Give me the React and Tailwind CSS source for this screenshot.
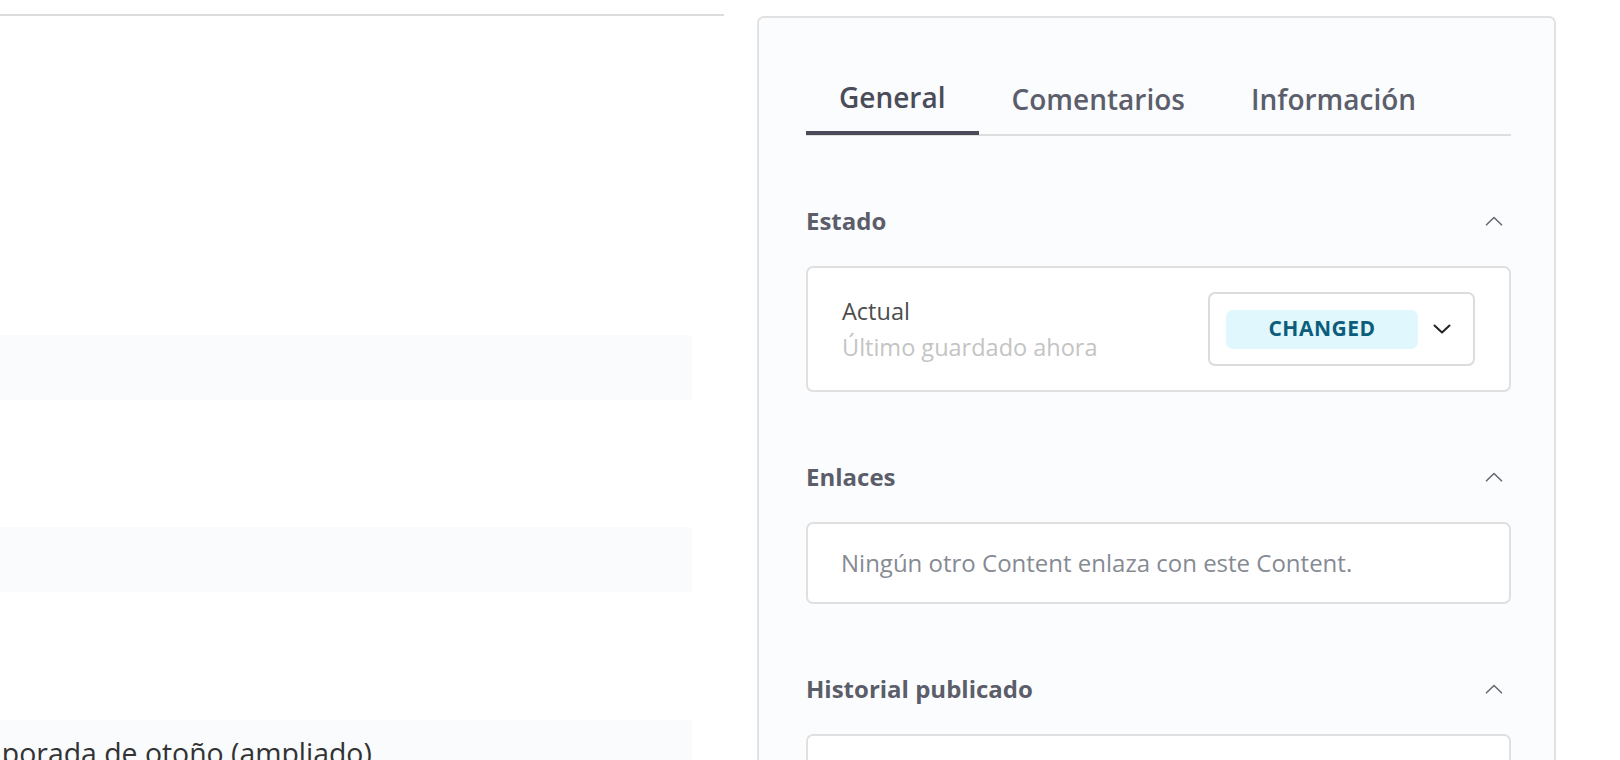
import React from 'react';

const ChevronUp = () => (
  <svg width="18" height="10" viewBox="0 0 18 10" fill="none" stroke="#666a73" strokeWidth="1.6" strokeLinecap="round" strokeLinejoin="round">
    <path d="M1.5 8.8 L9 1.5 L16.5 8.8" />
  </svg>
);

const ChevronDown = () => (
  <svg width="18" height="10" viewBox="0 0 18 10" fill="none" stroke="#222" strokeWidth="2" strokeLinecap="round" strokeLinejoin="round">
    <path d="M1.5 1.5 L9 8.5 L16.5 1.5" />
  </svg>
);

// Section header + bordered card
const Section = ({ title, children, className = '' }) => (
  <div className="mt-[69px]">
    <div className="h-[32px] flex items-center justify-between">
      <h3 className="text-[24px] font-bold text-[#5b5e6a] leading-[32px]">{title}</h3>
      <span className="mr-[8px] flex items-center"><ChevronUp /></span>
    </div>
    <div className={`mt-[29px] bg-white border-2 border-[#e0e0e0] rounded-[7px] ${className}`}>
      {children}
    </div>
  </div>
);

const Tab = ({ label, active }) => (
  <button
    className={`px-[33px] pb-[15px] text-[28px] leading-[38px] font-semibold ${
      active ? 'text-[#4a4c59] border-b-4 border-[#4b4c59] -mb-[1px]' : 'text-[#5c5f6b]'
    }`}
  >
    {label}
  </button>
);

const App = () => {
  return (
    <div className="w-[1620px] h-[760px] overflow-hidden bg-white flex font-['Open_Sans',sans-serif]">
      {/* Left column (scrolled, mostly empty) */}
      <div className="w-[724px] shrink-0 overflow-hidden">
        <div className="h-[16px] border-b-2 border-[#dcdcdc]" />
        <div className="h-[319px]" />
        <div className="w-[692px] h-[65px] bg-[#fafbfd]" />
        <div className="h-[127px]" />
        <div className="w-[692px] h-[65px] bg-[#fafbfd]" />
        <div className="h-[128px]" />
        <div className="w-[692px] h-[65px] bg-[#fafbfd] flex items-center">
          <span className="-ml-[56px] text-[28.4px] text-[#333] whitespace-nowrap leading-[38px]">
            Temporada de otoño (ampliado)
          </span>
        </div>
      </div>

      {/* Right side panel */}
      <div className="ml-[33px] mt-[16px] w-[799px] shrink-0 h-[800px] border-2 border-[#e2e2e2] rounded-[7px] bg-[#fbfcfd] pl-[47px] pr-[43px] pt-[60px]">
        <div className="flex border-b-2 border-[#dedede]">
          <Tab label="General" active />
          <Tab label="Comentarios" />
          <Tab label="Información" />
        </div>

        <Section title="Estado" className="px-[34px] py-[24px] flex items-center justify-between">
          <div className="text-[23.5px] leading-[36px]">
            <p className="text-[#4d4d4d]">Actual</p>
            <p className="text-[#c4c4c4]">Último guardado ahora</p>
          </div>
          <div className="w-[267px] h-[74px] border-2 border-[#dcdcdc] rounded-[7px] flex items-center pl-[16px] pr-[22px] justify-between">
            <span className="w-[192px] h-[39px] rounded-[7px] bg-[#e0f7fd] text-[#0c5d7c] text-[21px] font-bold flex items-center justify-center tracking-[0.5px]">
              CHANGED
            </span>
            <ChevronDown />
          </div>
        </Section>

        <Section title="Enlaces" className="h-[82px] px-[33px] flex items-center">
          <p className="text-[24px] text-[#868a93] leading-[36px]">Ningún otro Content enlaza con este Content.</p>
        </Section>

        <Section title="Historial publicado" className="h-[120px]" />
      </div>
    </div>
  );
};

export default App;
